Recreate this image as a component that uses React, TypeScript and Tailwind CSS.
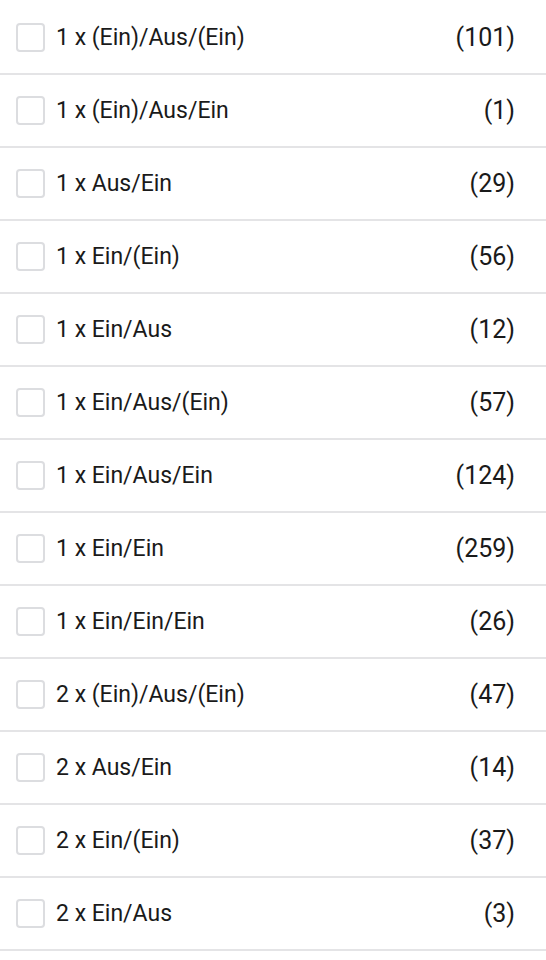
import React from 'react';

interface FilterOption {
  label: string;
  count: number;
}

const options: FilterOption[] = [
  { label: '1 x (Ein)/Aus/(Ein)', count: 101 },
  { label: '1 x (Ein)/Aus/Ein', count: 1 },
  { label: '1 x Aus/Ein', count: 29 },
  { label: '1 x Ein/(Ein)', count: 56 },
  { label: '1 x Ein/Aus', count: 12 },
  { label: '1 x Ein/Aus/(Ein)', count: 57 },
  { label: '1 x Ein/Aus/Ein', count: 124 },
  { label: '1 x Ein/Ein', count: 259 },
  { label: '1 x Ein/Ein/Ein', count: 26 },
  { label: '2 x (Ein)/Aus/(Ein)', count: 47 },
  { label: '2 x Aus/Ein', count: 14 },
  { label: '2 x Ein/(Ein)', count: 37 },
  { label: '2 x Ein/Aus', count: 3 },
];

const App: React.FC = () => {
  return (
    <div className="w-[546px] bg-white pt-[2px] font-['Roboto',sans-serif] text-[#1a1a1a]">
      {options.map((opt) => (
        <label
          key={opt.label}
          className="flex h-[73px] items-center border-b-2 border-[#e4e4e6] pl-4 pr-[31px]"
        >
          <span className="h-[29px] w-[29px] shrink-0 rounded-[4px] border-2 border-[#dcdde0] bg-white" />
          <span className="ml-[11px] flex-1 text-[23px] leading-none">{opt.label}</span>
          <span className="text-[25px] leading-none">({opt.count})</span>
        </label>
      ))}
    </div>
  );
};

export default App;
